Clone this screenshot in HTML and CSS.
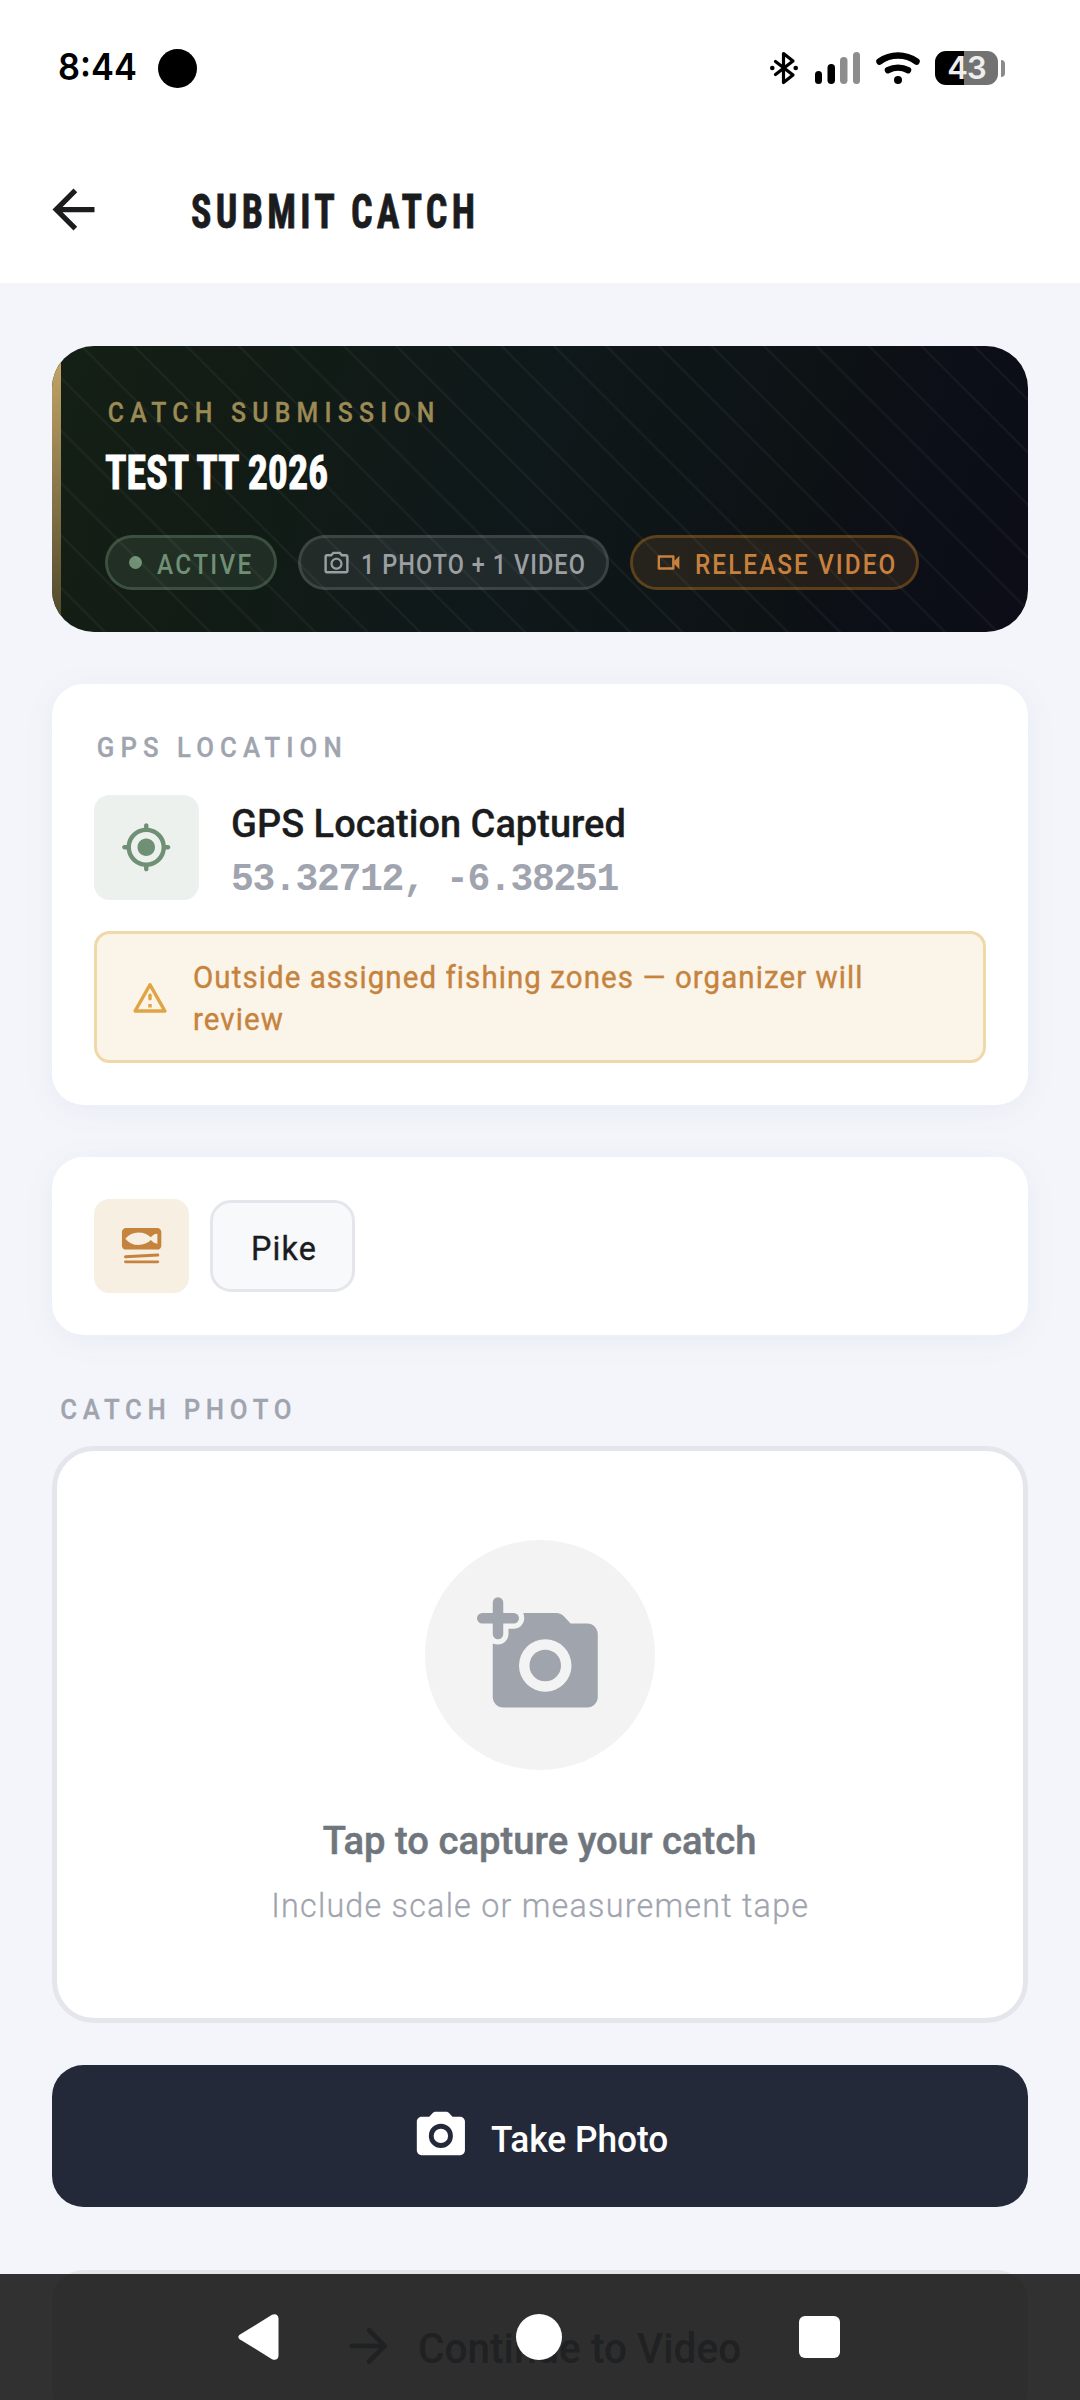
FILE: index.html
```html
<!DOCTYPE html>
<html lang="en">
<head>
<meta charset="utf-8">
<title>Submit Catch</title>
<link rel="stylesheet" href="styles.css">
</head>
<body>
<header>
  <div class="status">
    <span class="time">8:44</span>
    <span class="camera-dot"></span>
    <svg class="bt" width="30" height="36" viewBox="0 0 30 36" fill="none" stroke="#000" stroke-width="3.200" stroke-linecap="round" stroke-linejoin="round"><path d="M6.500 11.500 L24 25 L14.500 32.500 V3.500 L24 11 L6.500 24.500"/><circle cx="3.300" cy="18" r="2.300" fill="#000" stroke="none"/><circle cx="26.700" cy="18" r="2.300" fill="#000" stroke="none"/></svg>
    <svg class="signal" width="46" height="32" viewBox="0 0 46 32"><rect x="0" y="19" width="7" height="13" rx="3.500"/><rect x="12.500" y="12" width="7.500" height="20" rx="3.700"/><rect x="25" y="5" width="7.500" height="27" rx="3.700" fill="#8d8d8d"/><rect x="38" y="0" width="7" height="32" rx="3.500" fill="#8d8d8d"/></svg>
    <svg class="wifi" width="44" height="32" viewBox="0 0 44 32" fill="none" stroke="#000" stroke-width="6.500" stroke-linecap="round"><path d="M3.500 9.500 C14.500 1.600 29.500 1.600 40.500 9.500"/><path d="M12 18.200 C18 14.900 26 14.900 32 18.200"/><circle cx="22" cy="28" r="4" fill="#000" stroke="none"/></svg>
    <span class="battery"><span class="level">43</span><span class="nub"></span></span>
  </div>
  <div class="appbar">
    <svg width="63" height="63" viewBox="0 0 24 24" fill="#1b1c1e"><path d="M20 11H7.830l5.590-5.590L12 4l-8 8 8 8 1.410-1.410L7.830 13H20v-2z"/></svg>
    <h1>SUBMIT CATCH</h1>
  </div>
</header>

<main>
  <section class="banner">
    <svg class="stripes" width="976" height="286"><defs><pattern id="p" width="52.500" height="52.500" patternUnits="userSpaceOnUse" x="29.500" y="0"><path d="M-10 -10 L62.500 62.500 M42.500 -10 L62.500 10 M-10 42.500 L10 62.500" stroke="#fff" stroke-opacity=".045" stroke-width="2.200"/></pattern></defs><rect width="976" height="286" fill="url(#p)"/></svg>
    <div class="accent"></div>
    <p class="eyebrow">CATCH SUBMISSION</p>
    <h2>TEST TT 2026</h2>
    <div class="chips">
      <span class="chip active"><i class="dot"></i><b>ACTIVE</b></span>
      <span class="chip media"><svg width="29" height="29" viewBox="0 0 24 24" fill="currentColor"><path d="M20 5h-3.170L15 3H9L7.170 5H4c-1.100 0-2 .9-2 2v12c0 1.100.9 2 2 2h16c1.100 0 2-.9 2-2V7c0-1.100-.9-2-2-2zm0 14H4V7h4.050l1.830-2h4.240l1.830 2H20v12zM12 8c-2.760 0-5 2.240-5 5s2.240 5 5 5 5-2.240 5-5-2.240-5-5-5zm0 8.200c-1.770 0-3.200-1.430-3.200-3.200s1.430-3.200 3.200-3.200 3.200 1.430 3.200 3.200-1.430 3.200-3.200 3.200z"/></svg><b>1 PHOTO + 1 VIDEO</b></span>
      <span class="chip release"><svg width="29" height="29" viewBox="0 0 24 24" fill="currentColor"><path d="M15 8v8H5V8h10m1-2H4c-.55 0-1 .45-1 1v10c0 .55.45 1 1 1h12c.55 0 1-.45 1-1v-3.500l4 4v-11l-4 4V7c0-.55-.45-1-1-1z"/></svg><b>RELEASE VIDEO</b></span>
    </div>
  </section>

  <section class="card gps">
    <p class="label">GPS LOCATION</p>
    <div class="gps-row">
      <div class="tile green"><svg width="52.500" height="52.500" viewBox="0 0 24 24" fill="#6f9075"><path d="M12 8c-2.210 0-4 1.790-4 4s1.790 4 4 4 4-1.790 4-4-1.790-4-4-4zm8.940 3A8.994 8.994 0 0 0 13 3.060V2c0-.55-.45-1-1-1s-1 .45-1 1v1.060A8.994 8.994 0 0 0 3.060 11H2c-.55 0-1 .45-1 1s.45 1 1 1h1.060A8.994 8.994 0 0 0 11 20.940V22c0 .55.45 1 1 1s1-.45 1-1v-1.060A8.994 8.994 0 0 0 20.940 13H22c.55 0 1-.45 1-1s-.45-1-1-1h-1.060zM12 19c-3.870 0-7-3.130-7-7s3.130-7 7-7 7 3.130 7 7-3.130 7-7 7z"/></svg></div>
      <div class="gps-text">
        <p class="gps-title">GPS Location Captured</p>
        <p class="coords">53.32712, -6.38251</p>
      </div>
    </div>
    <div class="warning">
      <svg width="42" height="42" viewBox="0 0 24 24" fill="none" stroke="#e0a445" stroke-width="2" stroke-linejoin="round"><path d="M12 5 L20.500 20 H3.500 Z"/><path d="M12 11v2" stroke-linecap="round"/><path d="M12 16v2"/></svg>
      <p>Outside assigned fishing zones — organizer will<br>review</p>
    </div>
  </section>

  <section class="card species">
    <div class="tile sand"><svg width="47.250" height="47.250" viewBox="0 0 24 24"><path fill="#c5833e" fill-rule="evenodd" d="M4 3h16c1.100 0 2 .9 2 2v7c0 1.100-.9 2-2 2H4c-1.100 0-2-.9-2-2V5c0-1.100.9-2 2-2z M3.700 8.500C5.500 6.300 7.800 5.300 10.300 5.300c2.700 0 5 1 6.400 2.500 .8-1 1.800-1.700 3.300-1.800v5c-1.500-.1-2.500-.8-3.300-1.800 -1.400 1.500-3.700 2.500-6.400 2.500 -2.500 0-4.800-1-6.600-3.200z"/><path d="M3.800 17.700l16.400-.9M3.800 20.250h16.400" stroke="#c5833e" stroke-width="1.500" stroke-linecap="round"/></svg></div>
    <span class="species-chip"><span>Pike</span></span>
  </section>

  <p class="label photo-label">CATCH PHOTO</p>
  <section class="photo">
    <div class="circle"><svg width="126" height="126" viewBox="0 0 24 24" fill="#a0a4ac"><path fill-rule="evenodd" d="M3 9.820V20c0 1.100.9 2 2 2h16c1.100 0 2-.9 2-2V8c0-1.100-.9-2-2-2h-3.170l-1.240-1.350c-.37-.41-.91-.65-1.470-.65H8.820c.11.310.18.650.18 1 0 1.100-.9 2-2 2H6v1c0 1.100-.9 2-2 2-.35 0-.69-.07-1-.18zM13 9a5 5 0 1 0 0 10 5 5 0 1 0 0-10z"/><circle cx="13" cy="14" r="3"/><path d="M4 2v6M1 5h6" stroke="#a0a4ac" stroke-width="2" stroke-linecap="round"/></svg></div>
    <p class="photo-title">Tap to capture your catch</p>
    <p class="photo-hint">Include scale or measurement tape</p>
  </section>

  <div class="button primary">
    <svg width="57.750" height="57.750" viewBox="0 0 24 24" fill="#fff"><path fill-rule="evenodd" d="M4 4h3.170l1.240-1.350C8.780 2.240 9.320 2 9.880 2h4.240c.56 0 1.100.24 1.470.65L16.830 4H20c1.100 0 2 .9 2 2v12c0 1.100-.9 2-2 2H4c-1.100 0-2-.9-2-2V6c0-1.100.9-2 2-2zM12 7a5 5 0 1 0 0 10 5 5 0 1 0 0-10z"/><circle cx="12" cy="12" r="3"/></svg>
    <span>Take Photo</span>
  </div>
  <div class="button secondary">
    <svg width="57.750" height="57.750" viewBox="0 0 24 24" fill="none" stroke="#9fa3a9" stroke-width="2" stroke-linecap="round" stroke-linejoin="round"><path d="M5.300 12H18.500M12.500 5.500L19 12l-6.500 6.500"/></svg>
    <span>Continue to Video</span>
  </div>
</main>

<nav>
  <svg width="41" height="46" viewBox="0 0 41 46" fill="#fff"><path d="M34 .8 C37.500 -1 40.500 1 40.500 4.500 V41.500 C40.500 45 37.500 47 34 45.200 L2 25.500 C-.2 24 -.2 22 2 20.500 Z"/></svg>
  <i class="home"></i>
  <i class="recent"></i>
</nav>
</body>
</html>
```
FILE: styles.css
```css
* { box-sizing: border-box; margin: 0; padding: 0; }
body { width: 1080px; height: 2400px; overflow: hidden; background: #f4f5fa; font-family: Roboto, sans-serif; color: #1b1c1e; position: relative; }
svg { flex: none; display: block; overflow: visible; }
p, h1, h2, span, b { white-space: nowrap; }

header { height: 283px; background: #fff; }
.status { height: 136px; display: flex; align-items: center; padding-left: 58px; }
.time { width: 100px; font: 600 37px/44px Inter, sans-serif; color: #000; transform: translateY(-1.500px) scaleX(.93); transform-origin: 0 50%; }
.camera-dot { width: 39px; height: 39px; border-radius: 50%; background: #000; }
.bt { margin-left: 572px; }
.signal { margin-left: 16px; }
.wifi { margin-left: 15px; }
.battery { margin-left: 15px; display: flex; align-items: center; gap: 3px; }
.level { width: 63px; height: 34px; border-radius: 11px; background: linear-gradient(90deg, #000 29px, #727272 29px); color: #eee; font: 600 31px/34px Inter, sans-serif; text-align: center; letter-spacing: -1px; }
.nub { width: 4px; height: 17px; border-radius: 0 4px 4px 0; background: #8a8a8a; }

.appbar { height: 147px; display: flex; align-items: center; padding-left: 42px; gap: 86px; }
h1 { font: 700 48px/60px "Roboto Condensed", sans-serif; letter-spacing: 5.400px; transform: translateY(2px) scaleX(.79); transform-origin: 0 50%; -webkit-text-stroke: .8px #1b1c1e; }

main { padding: 63px 52px 0; }
.banner { position: relative; height: 286px; padding: 49.500px 0 0 53px; border-radius: 42px; overflow: hidden; background: linear-gradient(106.350deg, #141f15 0%, #121c15 20%, #0f181a 48%, #0d1215 75%, #0c0f17 86%, #0c0d17 100%); }
.stripes { position: absolute; inset: 0; }
.accent { position: absolute; left: 0; top: 0; width: 8.500px; height: 286px; background: linear-gradient(#c8a96a, #4a4528); }
.eyebrow, .label { font-weight: 500; transform-origin: 0 50%; transform: scaleX(.92); -webkit-text-stroke: .3px; }
.eyebrow { position: relative; font-size: 27px; line-height: 34px; letter-spacing: 6.750px; color: #9c8a55; padding-left: 3px; }
h2 { margin-top: 19.500px; font: 700 48px/48px "Roboto Condensed", sans-serif; color: #fff; transform: scaleX(.83); transform-origin: 0 50%; -webkit-text-stroke: .8px #fff; }
.chips { display: flex; gap: 21px; margin-top: 38px; }
.chip { height: 55px; border: 3px solid; border-radius: 28px; padding-left: 20.500px; display: flex; align-items: center; gap: 10.500px; }
.chip b { font: 500 27px/34px Roboto, sans-serif; letter-spacing: 2.600px; transform: translateY(2px) scaleX(.9); transform-origin: 0 50%; }
.active { width: 172px; color: #6f9075; background: rgba(111,144,117,.16); background-clip: padding-box; border-color: rgba(111,144,117,.45); gap: 15px; }
.dot { width: 13px; height: 13px; border-radius: 50%; background: currentColor; }
.media { width: 311px; color: #9b9fa1; background: rgba(255,255,255,.08); background-clip: padding-box; border-color: rgba(255,255,255,.19); }
.media svg, .release svg { width: 29px; }
.media b { letter-spacing: 1.200px; transform: translateY(2px) scaleX(.87); }
.release { width: 289px; color: #c8813d; background: rgba(200,129,61,.13); background-clip: padding-box; border-color: rgba(200,129,31,.42); }
.release b { letter-spacing: 2.300px; margin-left: 2px; }

.card { margin-top: 52.500px; padding: 42px; background: #fff; border-radius: 31.500px; box-shadow: 0 5px 32px rgba(50,110,160,.065); }
.gps { height: 420.500px; margin-top: 52px; }
.label { font-size: 28px; line-height: 43px; letter-spacing: 6.600px; color: #a0a4af; padding-left: 3px; }
.gps-row { display: flex; gap: 32px; margin-top: 25.500px; height: 105px; }
.tile { display: flex; align-items: center; justify-content: center; border-radius: 15.750px; }
.green { width: 105px; height: 105px; background: #ecf1ed; }
.gps-text { padding-top: 2px; }
.gps-title { font-size: 39.400px; line-height: 54px; font-weight: 500; transform: scaleX(.965); transform-origin: 0 50%; -webkit-text-stroke: .3px #1b1c1e; }
.coords { font: 700 38px/54px "Liberation Mono", monospace; letter-spacing: -1.300px; color: #a0a4af; transform: translateY(2px); }
.warning { margin-top: 31px; height: 132px; padding-left: 31.500px; display: flex; align-items: center; gap: 22.500px; border: 3px solid #efd9a9; border-radius: 15.750px; background: #fbf4e8; }
.warning p { font-size: 31px; line-height: 42px; letter-spacing: 1.150px; color: #c5833e; transform: translateY(2px) scaleX(.95); transform-origin: 0 50%; -webkit-text-stroke: .4px #c5833e; }

.species { height: 178.500px; margin-top: 52px; display: flex; gap: 21px; align-items: center; }
.sand { width: 94.500px; height: 94.500px; background: #f6efe2; }
.species-chip { width: 145px; height: 92px; border: 3px solid #e5e6eb; border-radius: 21px; background: #f8f9fb; display: flex; align-items: center; padding-left: 38px; font-size: 34px; }
.species-chip span { letter-spacing: 1.250px; transform: translateY(2px) scaleX(.95); transform-origin: 0 50%; -webkit-text-stroke: .4px #1b1c1e; }

.photo-label { margin-top: 53px; padding-left: 9px; line-height: 44px; letter-spacing: 6.200px; }
.photo { margin-top: 13.500px; height: 577.500px; border: 5px solid #e5e6eb; border-radius: 42px; background: #fff; padding-top: 89.500px; display: flex; flex-direction: column; align-items: center; }
.circle { width: 230px; height: 230px; border-radius: 50%; background: #f3f3f3; display: flex; align-items: center; justify-content: center; }
.photo-title { margin-top: 43.500px; font-size: 39.400px; line-height: 54px; font-weight: 500; color: #70767d; transform: scaleX(.97); -webkit-text-stroke: .5px #70767d; }
.photo-hint { margin-top: 14px; font-size: 34px; line-height: 46px; font-weight: 300; letter-spacing: 1.300px; color: #a0a4af; transform: scaleX(.95); -webkit-text-stroke: .3px #a0a4af; }

.button { display: flex; align-items: center; justify-content: center; gap: 22px; height: 142px; border-radius: 31.500px; }
.button span { transform: translateY(3px) scaleX(.966); transform-origin: 0 50%; font-weight: 500; }
.primary { margin-top: 42px; background: #232939; color: #fff; }
.primary span { width: 177px; font-size: 36.500px; }
.secondary { margin-top: 62.500px; height: 152px; background: #e5e6e8; color: #9fa3a9; }
.secondary span { width: 323px; font-size: 42px; }

nav { position: absolute; left: 0; bottom: 0; width: 1080px; height: 126px; background: rgba(0,0,0,.8); display: flex; justify-content: space-between; align-items: center; padding: 0 240px 0 238px; }
.home { width: 46px; height: 46px; border-radius: 50%; background: #fff; }
.recent { width: 41px; height: 42px; border-radius: 6px; background: #fff; }
```
